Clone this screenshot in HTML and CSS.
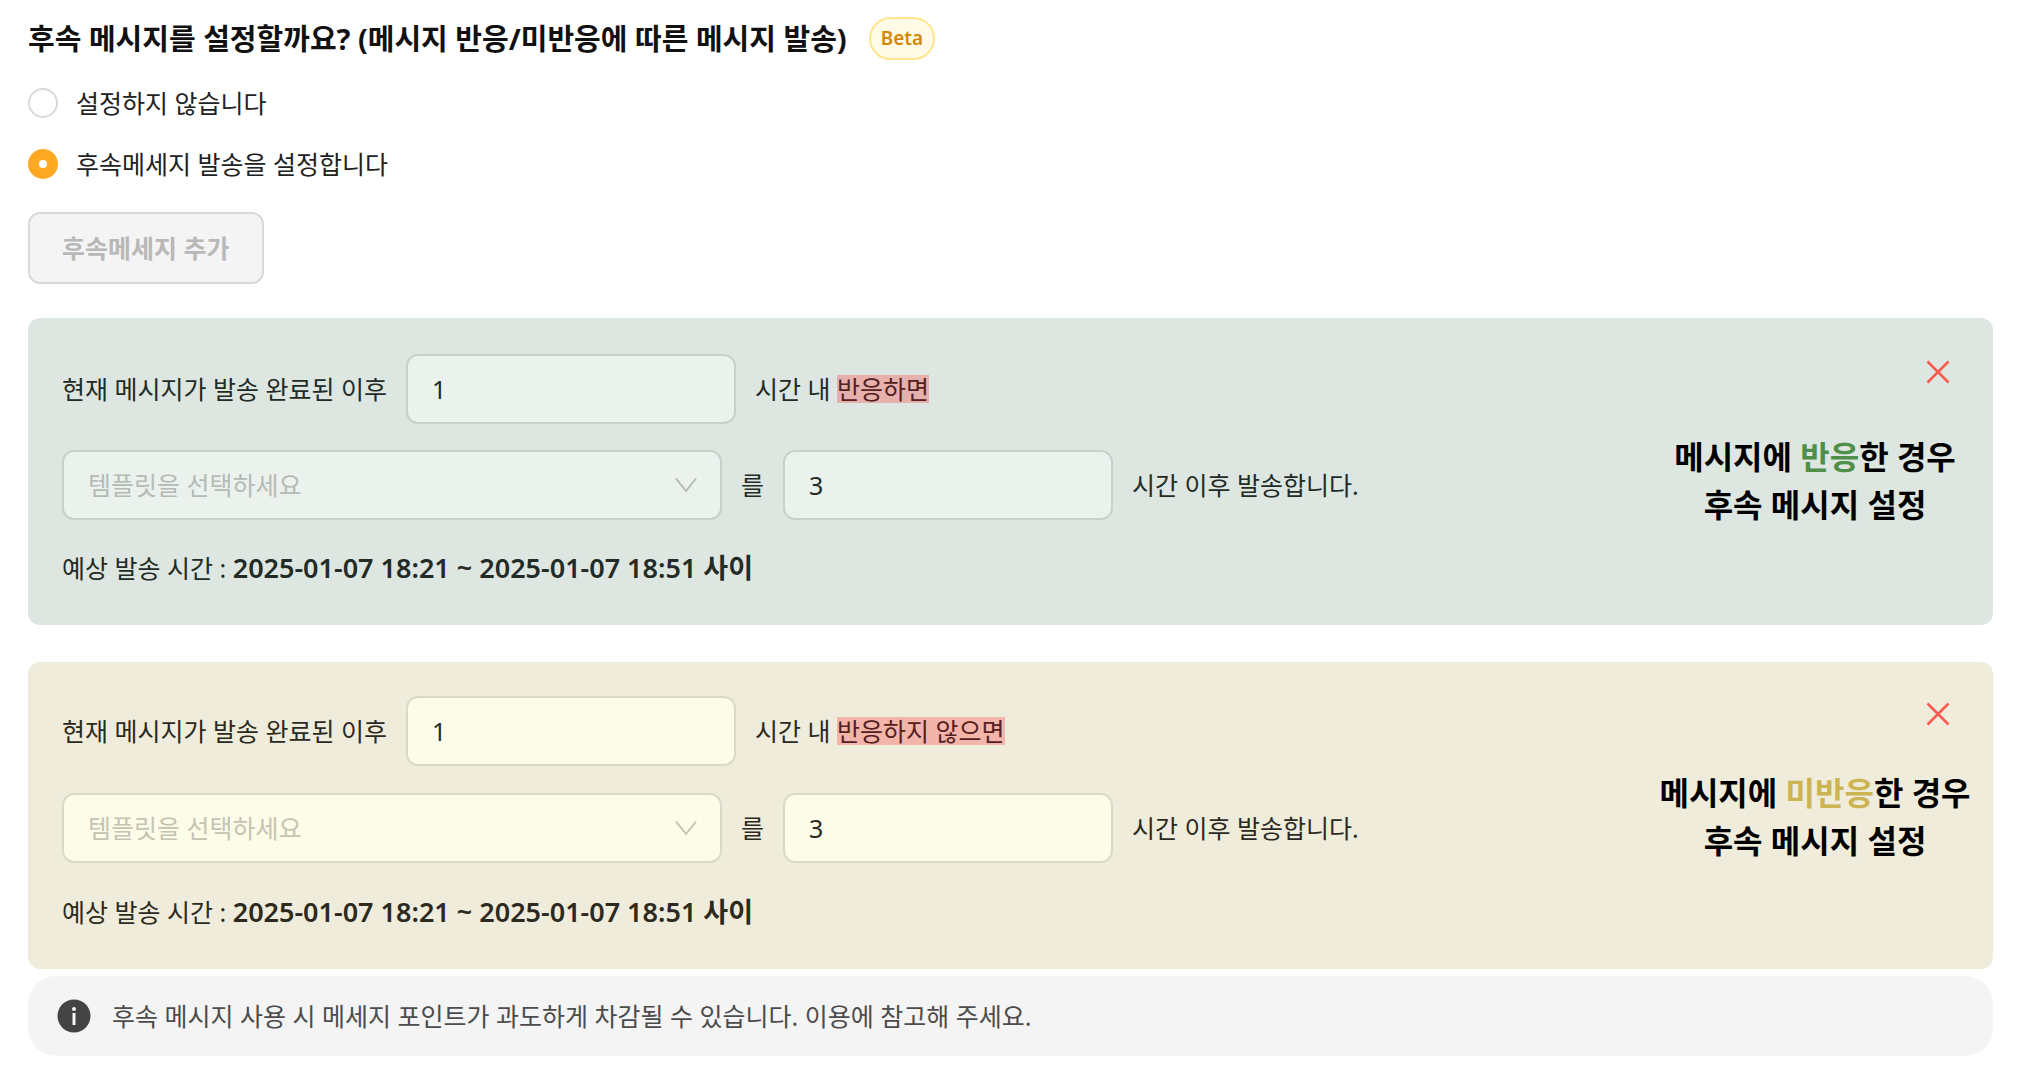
FILE: index.html
```html
<!DOCTYPE html>
<html lang="ko">
	<head>
		<meta charset="utf-8">
		<meta name="viewport" content="width=device-width,initial-scale=1">
		<title>후속 메시지 설정</title>
		<link rel="stylesheet" href="styles.css">
	</head>
	<body>
		<main class="container">
			<header class="title">
				<h1>후속 메시지를 설정할까요? (메시지 반응/미반응에 따른 메시지 발송)</h1>
				<span class="badge">Beta</span>
			</header>
			<div class="options">
				<label class="option"><input type="radio" name="followup" value="off">설정하지 않습니다</label>
				<label class="option"><input type="radio" name="followup" value="on" checked>후속메세지 발송을 설정합니다</label>
			</div>
			<button class="add-button" type="button" disabled>후속메세지 추가</button>

			<section class="card card-react">
				<div class="fields">
					<div class="row">
						<label for="react-within">현재 메시지가 발송 완료된 이후</label>
						<input class="box" id="react-within" type="text" value="1">
						<span>시간 내 <mark>반응하면</mark></span>
					</div>
					<div class="row">
						<div class="select">
							<select class="box" id="react-template" aria-label="템플릿">
								<option>템플릿을 선택하세요</option>
							</select>
							<svg viewBox="0 0 24 16"><path d="M2 1.5L12 14L22 1.5"/></svg>
						</div>
						<label for="react-template">를</label>
						<input class="box" id="react-after" type="text" value="3">
						<label for="react-after">시간 이후 발송합니다.</label>
					</div>
					<p class="expected">예상 발송 시간 : <strong>2025-01-07 18:21 ~ 2025-01-07 18:51 사이</strong></p>
				</div>
				<div class="side">
					<button class="close" type="button" aria-label="삭제">
						<svg viewBox="0 0 24 24"><path d="M1.5 1.5L22.5 22.5M22.5 1.5L1.5 22.5"/></svg>
					</button>
					<p class="note">메시지에 <em>반응</em>한 경우<br>후속 메시지 설정</p>
				</div>
			</section>

			<section class="card card-miss">
				<div class="fields">
					<div class="row">
						<label for="miss-within">현재 메시지가 발송 완료된 이후</label>
						<input class="box" id="miss-within" type="text" value="1">
						<span>시간 내 <mark>반응하지 않으면</mark></span>
					</div>
					<div class="row">
						<div class="select">
							<select class="box" id="miss-template" aria-label="템플릿">
								<option>템플릿을 선택하세요</option>
							</select>
							<svg viewBox="0 0 24 16"><path d="M2 1.5L12 14L22 1.5"/></svg>
						</div>
						<label for="miss-template">를</label>
						<input class="box" id="miss-after" type="text" value="3">
						<label for="miss-after">시간 이후 발송합니다.</label>
					</div>
					<p class="expected">예상 발송 시간 : <strong>2025-01-07 18:21 ~ 2025-01-07 18:51 사이</strong></p>
				</div>
				<div class="side">
					<button class="close" type="button" aria-label="삭제">
						<svg viewBox="0 0 24 24"><path d="M1.5 1.5L22.5 22.5M22.5 1.5L1.5 22.5"/></svg>
					</button>
					<p class="note">메시지에 <em>미반응</em>한 경우<br>후속 메시지 설정</p>
				</div>
			</section>

			<div class="info">
				<svg viewBox="0 0 34 34">
					<circle cx="17" cy="17" r="16.5" fill="#444"/>
					<circle cx="17" cy="10" r="2" fill="#f4f4f4"/>
					<rect x="15.5" y="14" width="3" height="12" fill="#f4f4f4"/>
				</svg>
				<p>후속 메시지 사용 시 메세지 포인트가 과도하게 차감될 수 있습니다. 이용에 참고해 주세요.</p>
			</div>
		</main>
	</body>
</html>
```
FILE: styles.css
```css
* {
	box-sizing: border-box;
	margin: 0;
	padding: 0;
}
body {
	background: #fff;
	color: #222;
	font-family: "Noto Sans", "Noto Sans CJK KR", sans-serif;
	font-size: 25px;
	line-height: 30px;
}
button, input, select {
	font: inherit;
	color: inherit;
}
.container {
	padding: 17px 31px 26px 28px;
}
.title {
	display: flex;
	align-items: center;
	gap: 22px;
}
h1 {
	color: #111;
	font-size: 29px;
	line-height: 43px;
}
.badge {
	padding: 0 10px;
	border: 2px solid #ffe58f;
	border-radius: 22px;
	background: #fffbe6;
	color: #d48806;
	font-size: 19px;
	font-weight: 600;
	line-height: 39px;
}
.options {
	display: flex;
	flex-direction: column;
	align-items: flex-start;
	gap: 31px;
	margin-top: 28px;
}
.option {
	display: flex;
	align-items: center;
	gap: 18px;
}
.option input {
	appearance: none;
	width: 30px;
	height: 30px;
	border: 2px solid #d9d9d9;
	border-radius: 50%;
	background: #fff;
}
.option input:checked {
	border: 11px solid #ffa822;
}
.add-button {
	display: block;
	height: 72px;
	margin-top: 33px;
	padding: 0 32px;
	border: 2px solid #d9d9d9;
	border-radius: 12px;
	background: #f4f4f4;
	color: #b8b8b8;
	font-weight: 600;
}
.card {
	display: flex;
	justify-content: space-between;
	border-radius: 12px;
}
.card-react {
	--box: #ebf1ed;
	--line: #c8d0cb;
	--hint: #b4bbb6;
	--mark: #e6b0ad;
	--accent: #4f8f47;
	--gap: 26px;
	--note-gap: 43px;
	margin-top: 34px;
	padding: 36px 22px 35px 34px;
	background: #dde6e0;
	color: #222b26;
}
.card-miss {
	--box: #fdfce9;
	--line: #dad8c7;
	--hint: #c5c3b2;
	--mark: #f3b5a9;
	--accent: #ccb452;
	--gap: 27px;
	--note-gap: 37px;
	margin-top: 37px;
	padding: 34px 22px 35px 34px;
	background: #efecdc;
	color: #2c2a1e;
}
.fields {
	display: flex;
	flex-direction: column;
	gap: var(--gap);
}
.row {
	display: flex;
	align-items: center;
	gap: 19px;
}
.box {
	width: 330px;
	height: 70px;
	padding: 0 24px;
	border: 2px solid var(--line);
	border-radius: 12px;
	background: var(--box);
}
.select {
	position: relative;
}
.select .box {
	appearance: none;
	width: 660px;
	color: var(--hint);
}
.select svg {
	position: absolute;
	top: 27px;
	right: 24px;
	width: 24px;
	height: 16px;
	fill: none;
	stroke: var(--hint);
	stroke-width: 2;
	pointer-events: none;
}
mark {
	display: inline-block;
	background: var(--mark);
	color: #542020;
	line-height: 28px;
}
.expected {
	line-height: 44px;
}
.expected strong {
	font-size: 27px;
	font-weight: 600;
}
.side {
	display: flex;
	flex-direction: column;
	gap: var(--note-gap);
}
.close {
	align-self: flex-end;
	display: flex;
	align-items: center;
	justify-content: center;
	width: 36px;
	height: 36px;
	margin-right: 15px;
	border: 0;
	background: none;
}
.close svg {
	width: 24px;
	height: 24px;
	fill: none;
	stroke: #f9594f;
	stroke-width: 2.5;
}
.note {
	min-width: 312px;
	color: #000;
	font-size: 32px;
	font-weight: bold;
	line-height: 48px;
	text-align: center;
}
.note em {
	color: var(--accent);
	font-style: normal;
}
.info {
	display: flex;
	align-items: center;
	gap: 21px;
	margin-top: 7px;
	padding: 0 29px;
	border-radius: 28px;
	background: #f4f4f4;
	color: #4c4c4c;
	line-height: 80px;
}
.info svg {
	width: 34px;
	height: 34px;
}
```
